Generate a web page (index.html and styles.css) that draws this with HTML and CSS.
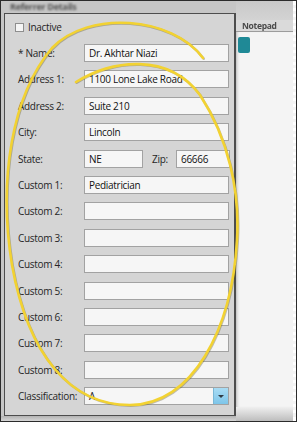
FILE: index.html
```html
<!DOCTYPE html>
<html lang="en">
<head>
    <meta charset="UTF-8">
    <meta name="viewport" content="width=device-width, initial-scale=1.0">
    <title>Referrer Details</title>
    <link rel="stylesheet" href="styles.css">
</head>
<body>
    <div class="screen">
        <!-- Left pane: referrer form -->
        <div class="details">
            <div class="pane-title"><span>Referrer Details</span></div>
            <div class="panel">
                <div class="check-row"><span class="checkbox"></span>Inactive</div>
                <div class="fields">
                    <div class="row"><span class="label">* Name:</span><span class="input">Dr. Akhtar Niazi</span></div>
                    <div class="row"><span class="label">Address 1:</span><span class="input">1100 Lone Lake Road</span></div>
                    <div class="row"><span class="label">Address 2:</span><span class="input">Suite 210</span></div>
                    <div class="row"><span class="label">City:</span><span class="input">Lincoln</span></div>
                    <div class="row">
                        <span class="label">State:</span><span class="input state">NE</span>
                        <span class="label zip-label">Zip:</span><span class="input zip">66666</span>
                    </div>
                    <div class="row"><span class="label">Custom 1:</span><span class="input">Pediatrician</span></div>
                    <div class="row"><span class="label">Custom 2:</span><span class="input"></span></div>
                    <div class="row"><span class="label">Custom 3:</span><span class="input"></span></div>
                    <div class="row"><span class="label">Custom 4:</span><span class="input"></span></div>
                    <div class="row"><span class="label">Custom 5:</span><span class="input"></span></div>
                    <div class="row"><span class="label">Custom 6:</span><span class="input"></span></div>
                    <div class="row"><span class="label">Custom 7:</span><span class="input"></span></div>
                    <div class="row"><span class="label">Custom 8:</span><span class="input"></span></div>
                    <div class="row">
                        <span class="label">Classification:</span>
                        <span class="input combo"><span class="combo-text">A</span><span class="combo-btn"></span></span>
                    </div>
                </div>
            </div>
            <div class="pane-foot"></div>
        </div>

        <!-- Right pane: notepad -->
        <div class="notepad">
            <div class="notepad-top"></div>
            <div class="notepad-title"><span>Notepad</span></div>
            <div class="notepad-body"><span class="note-tab"></span></div>
            <div class="notepad-foot"></div>
        </div>

        <!-- Yellow hand-drawn highlight over the form -->
        <svg class="annotation" width="297" height="422" viewBox="0 0 297 422">
            <path class="mark-shadow" d="M76,82 C112,60 168,52 200,95 C228,138 240,190 237,240 C232,330 192,405 130,405 C70,405 28,355 12,265 C-2,180 12,95 52,48 C88,10 172,16 203,58"/>
            <path class="mark" d="M76,82 C112,60 168,52 200,95 C228,138 240,190 237,240 C232,330 192,405 130,405 C70,405 28,355 12,265 C-2,180 12,95 52,48 C88,10 172,16 203,58"/>
        </svg>
    </div>
</body>
</html>
```

FILE: styles.css
```css
/* Base */
body {
    margin: 0;
    font-family: 'Open Sans', sans-serif;
    font-size: 10px;
    letter-spacing: -0.3px;
    color: #1e1e1e;
}
.screen {
    position: relative;
    width: 297px;
    height: 422px;
    box-sizing: border-box;
    border: 1px solid #2b2b2b;
    display: flex;
    overflow: hidden;
}

/* Left pane */
.details {
    width: 235px;
    display: flex;
    flex-direction: column;
    background-color: #c6c6c6;
}
.pane-title {
    height: 12px;
    padding-left: 9px;
    font-size: 9px;
    font-weight: bold;
    line-height: 11px;
    color: #555;
}
.pane-title span {
    filter: blur(0.8px);
}
.panel {
    margin-left: 3px;
    height: 403px;
    box-sizing: border-box;
    border: 1px solid #4d4d4d;
    border-right-width: 2px;
    background-color: #d5d5d5;
    padding-top: 8px;
}
.pane-foot {
    flex: 1;
    background: linear-gradient(#b3b3b3, #d6d6d6);
}
.check-row {
    height: 10px;
    padding-left: 10px;
    display: flex;
    align-items: center;
    gap: 4px;
}
.checkbox {
    width: 9px;
    height: 9px;
    box-sizing: border-box;
    border: 1px solid #8e8e8e;
    background-color: #f5f5f5;
}
.fields {
    margin-top: 12px;
    padding-left: 13px;
    display: flex;
    flex-direction: column;
    gap: 8.4px;
}
.row {
    height: 18px;
    display: flex;
    align-items: center;
}
.label {
    width: 66px;
    flex-shrink: 0;
    color: #262626;
}
.input {
    width: 145px;
    height: 18px;
    box-sizing: border-box;
    border: 1px solid #a2a2a2;
    background-color: #f6f6f6;
    padding-left: 4px;
    line-height: 16px;
    color: #111;
}
.input.state {
    width: 59px;
}
.zip-label {
    width: 24px;
    margin-left: 9px;
}
.input.zip {
    width: 54px;
}
.input.combo {
    display: flex;
}
.combo-text {
    flex: 1;
}
.combo-btn {
    width: 14px;
    background: linear-gradient(#a9dcf4, #7ec5e9);
    border-left: 1px solid #79b7d6;
    display: flex;
    align-items: center;
    justify-content: center;
}
.combo-btn::after {
    content: '';
    border-left: 3px solid transparent;
    border-right: 3px solid transparent;
    border-top: 3px solid #2f3b44;
}

/* Right pane */
.notepad {
    flex: 1;
    display: flex;
    flex-direction: column;
    background-color: #f4f4f4;
    border-right: 3px dotted #ffffff;
}
.notepad-top {
    height: 19px;
    background: linear-gradient(#c9c9c9, #d3d3d3);
}
.notepad-title {
    height: 11px;
    padding-left: 6px;
    background-color: #dadada;
    border-bottom: 1px solid #9c9c9c;
    font-size: 8.5px;
    font-weight: bold;
    line-height: 11px;
    color: #4a4a4a;
}
.notepad-title span {
    filter: blur(0.7px);
}
.notepad-body {
    flex: 1;
    padding: 5px 0 0 2px;
    box-shadow: inset 3px 0 3px -2px rgba(0, 0, 0, 0.25);
}
.note-tab {
    display: block;
    width: 12px;
    height: 16px;
    border-radius: 2px;
    background-color: #1f8996;
}
.notepad-foot {
    height: 14px;
    background: linear-gradient(#efefef, #bdbdbd);
}

/* Highlight stroke */
.annotation {
    position: absolute;
    top: -1px;
    left: -1px;
    pointer-events: none;
}
.annotation path {
    fill: none;
    stroke-linecap: round;
}
.mark {
    stroke: #f2d232;
    stroke-width: 2.6;
}
.mark-shadow {
    stroke: rgba(90, 80, 30, 0.35);
    stroke-width: 2.4;
    transform: translate(0.8px, 0.8px);
}
```
